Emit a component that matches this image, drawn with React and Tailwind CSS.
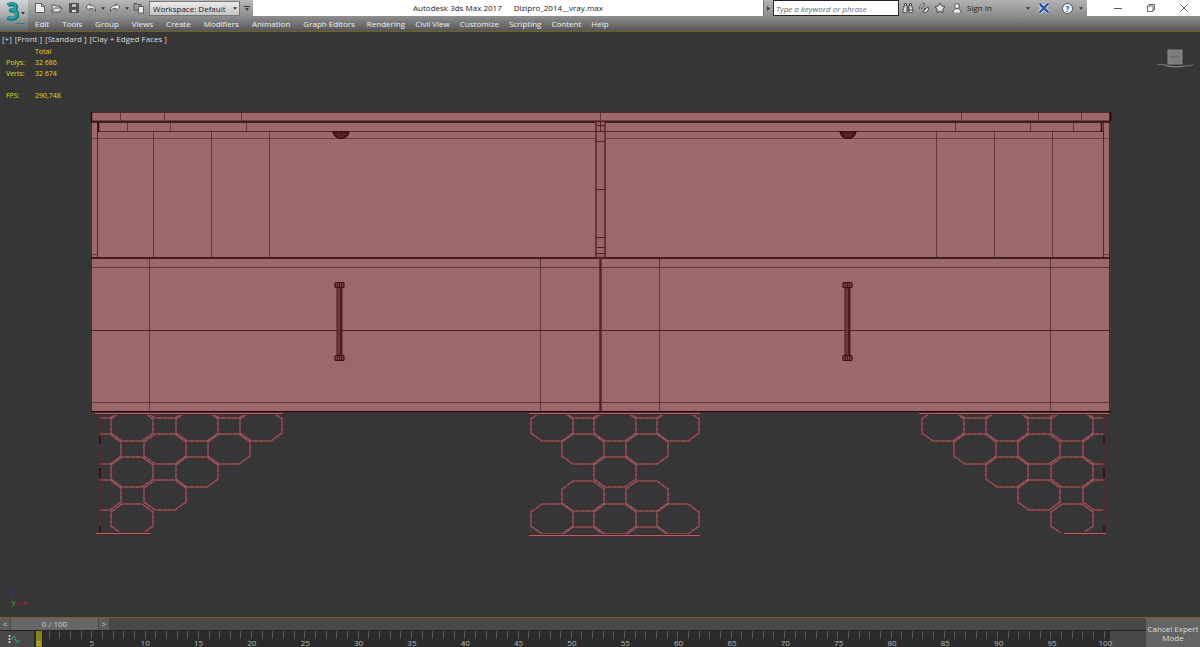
import {
  LuBinoculars, LuSatelliteDish, LuStar, LuUserRound,
} from "react-icons/lu"

// ── Data ──────────────────────────────────────────────────────────────────────
const MENUS = [
  "Edit", "Tools", "Group", "Views", "Create", "Modifiers", "Animation",
  "Graph Editors",
]
const MORE_MENUS = ["Rendering", "Civil View", "Customize", "Scripting", "Content", "Help"]

const STATS = [
  ["", "Total"],
  ["Polys:", "32 686"],
  ["Verts:", "32 674"],
  ["", ""],
  ["FPS:", "290,748"],
]

const FRAMES = Array.from({ length: 101 }, (_, i) => i)
const LABELS = Array.from({ length: 21 }, (_, i) => i * 5)

// Octagon centres of the leg lattices, [x, y]
const SIDE_LEG = [
  [100, 403], [165, 403], [229, 403],
  [132, 426], [197, 426], [261, 426],
  [100, 449], [165, 449], [229, 449],
  [132, 472], [197, 472],
  [100, 495], [165, 495],
  [132, 519],
]
const MID_LEG = [
  [583, 403], [647, 403],
  [552, 426], [615, 426], [678, 426],
  [583, 449], [647, 449],
  [615, 472],
  [583, 496], [647, 496],
  [552, 519], [615, 519], [678, 519],
  [583, 542], [647, 542],
]

const octagon = ([x, y]) =>
  [[-21, -7], [-10, -15], [10, -15], [21, -7], [21, 7], [10, 15], [-10, 15], [-21, 7]]
    .map(([dx, dy]) => `${x + dx},${y + dy}`).join(" ")

// ── Small parts ───────────────────────────────────────────────────────────────
const Caret = ({ className = "" }) => (
  <svg viewBox="0 0 5 3" className={`w-[4px] h-[3px] shrink-0 ${className}`}>
    <path d="M0 0h5L2.5 3z" fill="#333" />
  </svg>
)

const ToolButton = ({ label, children }) => (
  <button aria-label={label} className="w-3 h-3 shrink-0 flex items-center justify-center">
    <svg viewBox="0 0 12 12" className="w-3 h-3" fill="none" stroke="#444" strokeWidth="0.8">
      {children}
    </svg>
  </button>
)

const MenuGroup = ({ items, className }) => (
  <div className={`flex items-center ${className}`}>
    {items.map(m => (
      <button key={m} className="text-[8px] leading-[14px] text-[#eee] whitespace-nowrap">{m}</button>
    ))}
  </div>
)

const Logo = () => (
  <button aria-label="Application menu"
    className="w-7 h-[31px] shrink-0 bg-linear-to-b from-[#d2d6d6] via-[#a5abab] to-[#5f6565]">
    <svg viewBox="0 0 28 31" className="w-7 h-[31px]" fill="none">
      <path d="M8 5.500c3-2.500 8-1.500 8 1.500 0 2-2 3.300-5 3.300 4 0 6 1.700 6 4.200 0 4-5.500 5.500-9.500 3"
        stroke="#146f78" strokeWidth="4.200" strokeLinejoin="round" />
      <path d="M7.500 5c3-2.500 8-1.500 8 1.500 0 2-2 3.300-5 3.300 4 0 6 1.700 6 4.200 0 4-5.500 5.500-9 3"
        stroke="#1fa2a8" strokeWidth="2.400" />
      <path d="M16 23.500h9" stroke="#2f7f88" strokeWidth="1" />
      <path d="M21 12h4l-2 2.500z" fill="#333" />
    </svg>
  </button>
)

// ── Title bar ─────────────────────────────────────────────────────────────────
const QuickAccess = () => (
  <div className="flex items-center h-4 w-[225px] shrink-0 pl-[6px] bg-linear-to-b from-[#b9b9b9] to-[#8d8d8d]">
    <div className="flex items-center gap-[5px]">
      <ToolButton label="New">
        <path d="M1.500 1.500h6l3 3v6h-9z" fill="#eee" /><path d="M7.500 1.500v3h3" />
      </ToolButton>
      <ToolButton label="Open">
        <path d="M1 10V3h3l1 1h4v2M1 10l2.500-4H11l-2.500 4z" fill="#ddd" />
      </ToolButton>
      <ToolButton label="Save">
        <path d="M1.500 1.500h9v9h-9z" fill="#555" /><path d="M3.500 2h5v3h-5zM3.500 7.500h5v3h-5z" fill="#ddd" />
      </ToolButton>
      <ToolButton label="Undo">
        <path d="M1 5l4-3.500v2c4 0 6 2 5.500 6-1-2.500-2.500-3.200-5.500-3.200v2z" fill="#eee" />
      </ToolButton>
    </div>
    <Caret className="mx-1" />
    <ToolButton label="Redo">
      <path d="M11 5L7 1.500v2c-4 0-6 2-5.500 6 1-2.500 2.500-3.200 5.500-3.200v2z" fill="#eee" />
    </ToolButton>
    <Caret className="mx-1" />
    <ToolButton label="Project folder">
      <path d="M1 8V1.500h3l1 1h3V8z" fill="#999" /><path d="M5.500 4.500h5v6.500h-5z" fill="#eee" />
    </ToolButton>
    <div className="relative flex items-center ml-1">
      <select aria-label="Workspace"
        className="appearance-none w-[91px] h-[15px] pl-[3px] text-[8px] leading-[14px] text-[#222] bg-linear-to-b from-[#ececec] to-[#c4c4c4] border border-[#777]">
        <option>Workspace: Default</option>
      </select>
      <Caret className="absolute right-[3px]" />
    </div>
    <button aria-label="Customize toolbar" className="flex flex-col items-center gap-px ml-1">
      <span className="w-[6px] h-px bg-[#333]" />
      <Caret />
    </button>
  </div>
)

const InfoCenter = () => (
  <div className="flex items-center h-4 w-[324px] shrink-0 bg-linear-to-b from-[#b3b3b3] to-[#8d8d8d]">
    <button aria-label="Collapse search" className="w-[10px] h-4 flex items-center justify-center border-l border-[#777]">
      <svg viewBox="0 0 3 5" className="w-[3px] h-[5px]"><path d="M0 0l3 2.500L0 5z" fill="#333" /></svg>
    </button>
    <input aria-label="Search" placeholder="Type a keyword or phrase"
      className="w-[126px] h-4 px-[2px] text-[8px] italic text-[#333] placeholder:text-[#666] bg-white border border-[#222]" />
    <button aria-label="Find" className="ml-[3px]"><LuBinoculars className="w-3 h-3 text-[#444] fill-[#ddd]" /></button>
    <button aria-label="Subscription" className="ml-1"><LuSatelliteDish className="w-3 h-3 -scale-x-100 text-[#444] fill-[#eee]" /></button>
    <button aria-label="Favorites" className="ml-1"><LuStar className="w-3 h-3 text-[#444] fill-[#ddd]" /></button>
    <button className="ml-[5px] flex items-center gap-1 text-[8px] text-[#222] whitespace-nowrap">
      <LuUserRound className="w-3 h-3 text-[#555] fill-[#eee]" /> Sign In
    </button>
    <Caret className="ml-auto mr-2" />
    <button aria-label="Exchange apps">
      <svg viewBox="0 0 12 12" className="w-3 h-3" fill="none">
        <path d="M2 1.500c1 3 3 3 4 4.500s3 3 4.500 4.500M10.500 1.500c-2 1-3 3-4.500 4.500S3 9 1.500 10.500" stroke="#dde4f2" strokeWidth="4" />
        <path d="M2 1.500c1 3 3 3 4 4.500s3 3 4.500 4.500M10.500 1.500c-2 1-3 3-4.500 4.500S3 9 1.500 10.500" stroke="#3153a8" strokeWidth="2.400" />
      </svg>
    </button>
    <button aria-label="Help"
      className="ml-3 w-[11px] h-[11px] rounded-full bg-[#f2f5fb] border border-[#456] text-[8px] leading-[9px] font-bold text-[#2450b0]">
      ?
    </button>
    <Caret className="ml-[6px] mr-1" />
  </div>
)

const WindowButtons = () => (
  <div className="flex items-center h-4 w-[113px] shrink-0 justify-between pl-[27px] pr-3 text-[#555]">
    <button aria-label="Minimize">
      <svg viewBox="0 0 8 8" className="w-2 h-2" stroke="currentColor"><path d="M0 4.500h8" /></svg>
    </button>
    <button aria-label="Restore">
      <svg viewBox="0 0 8 8" className="w-2 h-2" fill="none" stroke="currentColor" strokeWidth="0.9">
        <path d="M.5 2h5.500v5.500H.5zM2 2V.5h5.500V6H6" />
      </svg>
    </button>
    <button aria-label="Close">
      <svg viewBox="0 0 8 8" className="w-2 h-2" stroke="currentColor" strokeWidth="0.9"><path d="M.5.5l7 7M7.500.5l-7 7" /></svg>
    </button>
  </div>
)

const Header = () => (
  <header className="flex shrink-0 border-b border-[#6b6224]">
    <Logo />
    <div className="flex-1 min-w-0">
      <div className="flex h-4 bg-white">
        <QuickAccess />
        <h1 className="flex-1 min-w-0 flex justify-center gap-3 text-[8px] leading-[15px] text-[#222] whitespace-nowrap">
          <span>Autodesk 3ds Max 2017</span>
          <span>Dizipro_2014__vray.max</span>
        </h1>
        <InfoCenter />
        <WindowButtons />
      </div>
      <nav className="flex items-center gap-3 h-[15px] pl-[7px] bg-linear-to-b from-[#909090] to-[#565656]">
        <MenuGroup items={MENUS} className="gap-[13px]" />
        <MenuGroup items={MORE_MENUS} className="gap-[10px]" />
      </nav>
    </div>
  </header>
)

// ── Model ─────────────────────────────────────────────────────────────────────
const Lattice = ({ cells }) => (
  <g fill="none">
    {cells.map(c => <polygon key={c.join()} points={octagon(c)} stroke="#4f2b2f" strokeWidth="3" />)}
    {cells.map(c => (
      <polygon key={c.join()} points={octagon(c)} stroke="#8c585d" strokeWidth="1.500" strokeDasharray="5 0.500" />
    ))}
  </g>
)

const SideLeg = () => (
  <g>
    <g clipPath="url(#side)"><Lattice cells={SIDE_LEG} /></g>
    <path d="M100 414V533" stroke="#60282d" strokeWidth="1.500" />
    <path d="M100 436v8M100 468v10M100 526v6" stroke="#300a0e" strokeWidth="1.500" />
  </g>
)

const Bar = ({ x, y, w }) => (
  <g>
    <rect x={x} y={y} width={w} height="3" fill="#4d2428" />
    <rect x={x + 1} y={y + 1} width={w - 2} height="1" fill="#a06a6e" />
  </g>
)

const Handle = ({ x }) => (
  <g>
    <rect x={x - 2.5} y="288" width="5" height="67" fill="#6b383b" stroke="#4a1a1e" />
    <path d={`M${x + 1.5} 289v65`} stroke="#4d1b1e" strokeWidth="2" />
    {[282.5, 355.5].map(y => (
      <g key={y}>
        <rect x={x - 4.5} y={y} width="9" height="5" rx="1" fill="#784246" stroke="#3a1013" strokeWidth="1.200" />
        <path d={`M${x - 2} ${y}v5M${x} ${y}v5M${x + 2} ${y}v5`} stroke="#3f1417" strokeWidth="0.800" />
      </g>
    ))}
  </g>
)

const Knob = ({ x }) => (
  <g>
    <path d={`M${x - 8} 132c1 8.500 15 8.500 16 0z`} fill="#4c1a1e" stroke="#270507" />
    <path d={`M${x - 5} 134h10M${x - 4} 136h8M${x - 2} 132v6M${x + 2} 132v6`} stroke="#6d363a" strokeWidth="0.500" />
  </g>
)

const Cabinet = () => (
  <g fill="none">
    <rect x="91" y="112" width="1019" height="300" fill="#9b686b" />

    {/* faint edges */}
    <g stroke="#62373a">
      <path d="M98 138.500H596M605 138.500H1103M92 138.500h6M92 254.500h6M1104 138.500h6M1104 254.500h6" opacity="0.800" />
      <path d="M153.500 132V257M211.500 132V257M269.500 132V257M936.500 132V257M994.500 132V257M1052.500 132V257" />
      <path d="M120.500 113v8M164.500 113v8M241.500 113v8M600.500 113v8M961.500 113v8M1038.500 113v8M1081.500 113v8" />
      <path d="M127.500 123v9M170.500 123v9M246.500 123v9M955.500 123v9M1030.500 123v9M1073.500 123v9" />
      <path d="M92 267.500H1110M92 402.500H1110M149.500 258V411M540.500 258V411M659.500 258V411M1050.500 258V411" />
      <path d="M91 330.500H1110" stroke="#482124" />
    </g>

    {/* outlines */}
    <g stroke="#5a2529">
      <path d="M91 112.500H1111M98 131.500H1103" />
      <path d="M91 120.500H1111" stroke="#6b4141" />
      <path d="M91.500 112V411M97.500 122V257M1103.500 122V257M1109.500 112V411" />
    </g>
    <g stroke="#2a0508">
      <path d="M91 122H1110M91 258H1110" strokeWidth="1.500" />
      <path d="M91.500 112v9M1110.500 112v9M98.500 123v9M1101.500 123v9" strokeWidth="1.500" />
      <path d="M91 411.500H1111" />
    </g>

    {/* centre post */}
    <rect x="596" y="121.500" width="9" height="136" fill="#96656a" stroke="#5a2529" strokeWidth="1.500" />
    <path d="M596 125.500h9M596 141.500h9M596 189.500h9M596 237.500h9M596 247.500h9M596 253.500h9M600.500 122v10M596 131.500h9" stroke="#512226" />
    <path d="M600.500 258V411" stroke="#5a2529" strokeWidth="2.500" />

    <Knob x={341} />
    <Knob x={848} />
    <Handle x={339.5} />
    <Handle x={847.5} />
  </g>
)

const Model = () => (
  <svg viewBox="0 32 1200 585" className="w-full h-full" role="img" aria-label="Cabinet, front view">
    <clipPath id="side"><rect x="99" y="414" width="190" height="119" /></clipPath>
    <clipPath id="mid"><rect x="526" y="414" width="178" height="121" /></clipPath>

    <SideLeg />
    <g transform="translate(1204 0) scale(-1 1)"><SideLeg /></g>
    <g clipPath="url(#mid)"><Lattice cells={MID_LEG} /></g>

    <Bar x={94} y={412} w={190} />
    <Bar x={528} y={412} w={173} />
    <Bar x={918} y={412} w={192} />
    <Bar x={95} y={532} w={57} />
    <Bar x={528} y={534} w={173} />
    <Bar x={1063} y={532} w={44} />
    <Cabinet />
  </svg>
)

// ── Viewport ──────────────────────────────────────────────────────────────────
const Viewport = () => (
  <main className="relative flex-1 min-h-0 bg-[#363636] border-b border-[#776328]">
    <Model />

    <div className="absolute left-0 top-0">
      <div className="flex gap-[3px] pl-[2px] pt-[2px] text-[8px] leading-[10px] text-[#ddd] whitespace-nowrap">
        <button>[+]</button>
        <button>[Front ]</button>
        <button>[Standard ]</button>
        <button>[Clay + Edged Faces ]</button>
      </div>
      <table className="ml-[6px] mt-[2px] text-[7px] text-[#e0d91a]">
        <tbody>
          {STATS.map(([name, value], i) => (
            <tr key={i} className="h-[11px] leading-[11px]">
              <th scope="row" className="w-[29px] p-0 text-left font-medium">{name}</th>
              <td className="p-0 font-medium">{value}</td>
            </tr>
          ))}
        </tbody>
      </table>
    </div>

    {/* View cube */}
    <svg viewBox="0 0 38 22" className="absolute right-[6px] top-[15px] w-[38px] h-[22px]" fill="none">
      <path d="M1 18c3-1 5-1 8 0M28 19c4 0 7 0 9-2" stroke="#777" />
      <path d="M9 18c4 2 13 2.500 19 1" stroke="#999" />
      <rect x="12" y="3" width="14" height="14" fill="#7c7c7c" stroke="#8a8a8a" />
      <path d="M15 10h8" stroke="#666" strokeWidth="2" strokeDasharray="1 0.500" />
    </svg>

    {/* Axis tripod */}
    <svg viewBox="0 0 20 22" className="absolute left-[10px] bottom-2 w-5 h-[22px]" fontSize="7">
      <path d="M1.500 17V7" stroke="#2a2ac0" />
      <path d="M4 16.500h9" stroke="#a01c1c" strokeDasharray="3 1" />
      <text x="2" y="7" fill="#3434d0">z</text>
      <text x="2" y="18" fill="#1fb03a">y</text>
      <text x="13" y="18" fill="#d01c1c">x</text>
    </svg>
  </main>
)

// ── Time line ─────────────────────────────────────────────────────────────────
const TimeLine = () => (
  <footer className="flex shrink-0 bg-[#484848] text-[#ccc]">
    <div className="flex-1 min-w-0">
      <div className="flex gap-px h-3 text-[8px] leading-3">
        <button aria-label="Previous frame" className="w-[10px] bg-[#5c5c5c]">&lt;</button>
        <button aria-label="Time slider" className="w-[87px] bg-[#666]">0 / 100</button>
        <button aria-label="Next frame" className="w-[10px] bg-[#5c5c5c]">&gt;</button>
      </div>
      <div className="flex h-[17px] border-t border-[#222]">
        <button aria-label="Open mini curve editor" className="w-[34px] shrink-0 flex items-center pl-2">
          <svg viewBox="0 0 12 8" className="w-3 h-2" fill="none">
            <path d="M1.500 0v8" stroke="#ddd" strokeWidth="1.500" strokeDasharray="2 1" />
            <path d="M4 5c1-5 2.500-5 3.500-1s2 5 3.500 1" stroke="#36b39a" />
          </svg>
        </button>
        <div className="relative flex-1 min-w-0 px-1 bg-[#2b2b2b]">
          <div className="absolute left-[2px] top-0 w-[6px] h-4 bg-[#88811f]" />
          <div className="relative flex justify-between h-2">
            {FRAMES.map(f => (
              <span key={f} className={f ? "w-px h-full bg-[#5a5a5a]" : "w-px h-full"} />
            ))}
          </div>
          <div className="relative flex justify-between text-[8px] leading-[8px]">
            {LABELS.map(l => (
              <span key={l} className={`w-px flex justify-center ${l ? "text-[#bbb]" : "text-[#e0d740]"}`}>{l}</span>
            ))}
          </div>
        </div>
        <div className="w-[36px] shrink-0" />
      </div>
    </div>
    <button className="w-[54px] shrink-0 bg-[#646464] text-[8px] leading-[9px] text-[#ddd]">
      Cancel Expert Mode
    </button>
  </footer>
)

const App = () => (
  <div className="flex flex-col h-screen overflow-hidden bg-[#363636] font-['Open_Sans','Noto_Sans',sans-serif]">
    <Header />
    <Viewport />
    <TimeLine />
  </div>
)

export default App
